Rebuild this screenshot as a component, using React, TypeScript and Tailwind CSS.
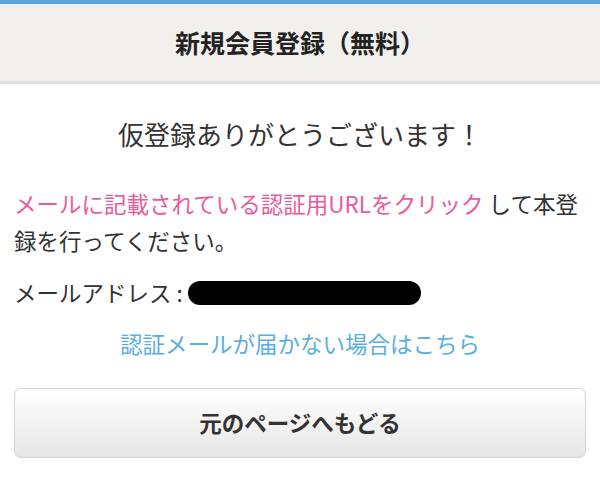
const jp = "font-['Noto_Sans_CJK_JP','Noto_Sans',sans-serif]";

export default function App() {
  return (
    <div className={`min-h-[489px] w-[600px] bg-white text-[#333] ${jp}`}>
      <div className="h-[4px] bg-[#5aa5dc]" />
      <header className="flex h-[80px] items-center justify-center border-b-[3px] border-[#e2e0dc] bg-[#f2f0ed]">
        <h1 className="text-[25px] font-bold text-[#222]">新規会員登録（無料）</h1>
      </header>

      <main className="px-[14px]">
        <p className="mt-[32px] text-center text-[26px] leading-[36px]">
          仮登録ありがとうございます！
        </p>

        <p className="mt-[33px] text-[22.5px] leading-[37px]">
          <span className="text-[#ea5a9d]">メールに記載されている認証用URLをクリック</span>{" "}
          して本登録を行ってください。
        </p>

        <div className="mt-[15px] flex items-center text-[22.5px] leading-[37px]">
          <span className="whitespace-pre">メールアドレス :</span>
          <span className="ml-[5px] h-[24px] w-[233px] rounded-[12px] bg-black" />
        </div>

        <p className="mt-[14px] text-center text-[22.5px] leading-[37px]">
          <a className="text-[#5aaee0]">認証メールが届かない場合はこちら</a>
        </p>

        <button className="mt-[26px] flex h-[70px] w-full items-center justify-center rounded-[7px] border border-[#d5d5d5] bg-gradient-to-b from-white to-[#e6e6e6] text-[22.5px] font-bold text-[#333]">
          元のページへもどる
        </button>
      </main>
    </div>
  );
}
